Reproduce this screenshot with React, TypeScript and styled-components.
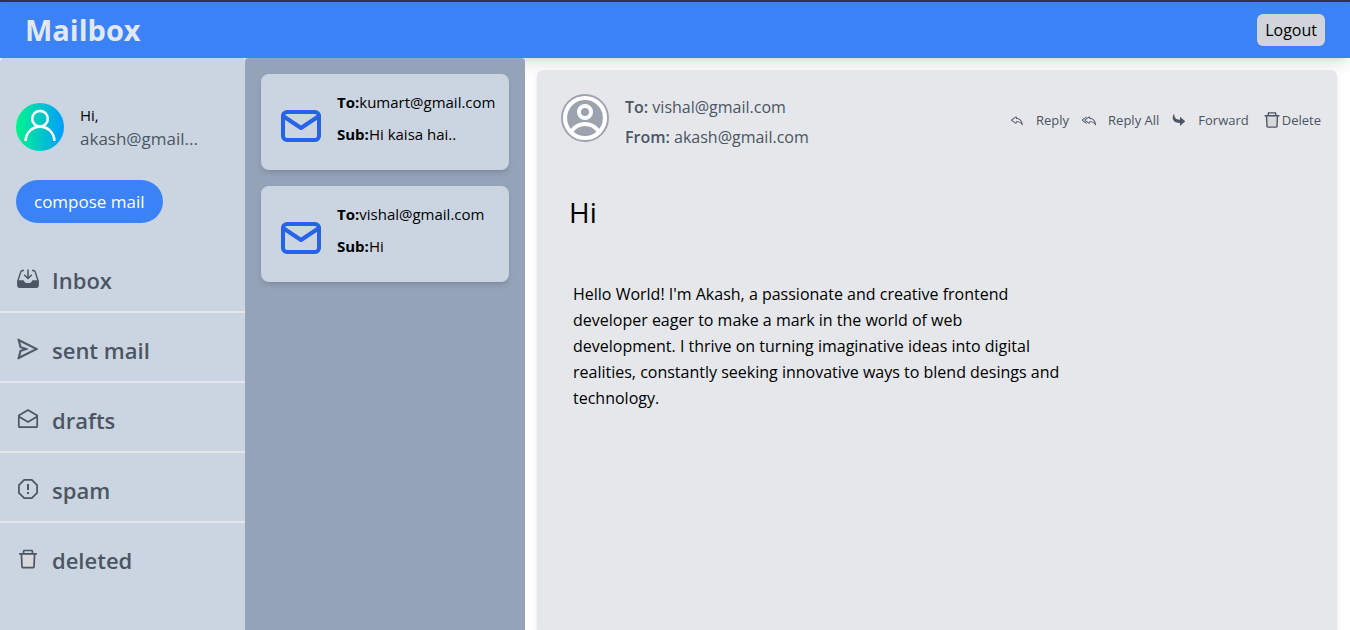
import React from "react";
import styled, { createGlobalStyle, css } from "styled-components";
import { AiOutlineSend } from "react-icons/ai";
import { TbMail } from "react-icons/tb";
import { BsReply, BsReplyAll } from "react-icons/bs";

const GlobalStyle = createGlobalStyle`
  *, *::before, *::after { box-sizing: border-box; }
  body {
    margin: 0;
    background: #fff;
    color: #000;
    font-family: "Open Sans", "Noto Sans", sans-serif;
    font-size: 15px;
    line-height: 24px;
  }
  h1, h2, p, ul { margin: 0; padding: 0; }
  ul { list-style: none; }
  button { font: inherit; border: 0; cursor: pointer; }
  svg { display: block; flex: none; }
`;

const Page = styled.div`
  display: flex;
  flex-direction: column;
  min-height: 100vh;
  border-top: 2px solid #2f3441;
`;

const Header = styled.header`
  display: flex;
  align-items: center;
  justify-content: space-between;
  height: 56px;
  padding: 0 25px;
  background: #3b82f6;
  box-shadow: 0 10px 15px -3px rgba(0, 0, 0, 0.1), 0 4px 6px -4px rgba(0, 0, 0, 0.1);
`;

const Brand = styled.h1`
  color: #e2e8f0;
  font-size: 29px;
  font-weight: 700;
  line-height: 36px;
`;

const LogoutButton = styled.button`
  height: 32px;
  padding: 0 8px;
  border-radius: 6px;
  background: #d1d5db;
  color: #000;
  font-size: 16px;
`;

const Columns = styled.div`
  display: flex;
  flex: 1;
`;

const Sidebar = styled.nav`
  position: relative;
  flex: none;
  width: 245px;
  padding-top: 45px;
  border-radius: 4px 4px 0 0;
  background: #cbd5e1;
`;

const Profile = styled.div`
  display: flex;
  align-items: center;
  gap: 16px;
  padding: 0 16px;
`;

const ProfileName = styled.p`
  flex: 1;
  white-space: nowrap;
`;

const Address = styled.span`
  color: #4b5563;
  font-size: 17px;
  font-weight: 500;
`;

const ComposeButton = styled.button`
  height: 43px;
  margin: 29px 16px 20px;
  padding: 0 18px;
  border-radius: 22px;
  background: #3b82f6;
  color: #fff;
  font-size: 17px;
`;

const Folder = styled.li`
  & + & {
    border-top: 2px solid #e5e7eb;
  }
`;

const FolderLink = styled.a`
  display: flex;
  align-items: center;
  gap: 12px;
  height: 68px;
  padding: 6px 16px 0;
  color: #4b5563;
  font-size: 22px;
  font-weight: 600;
  line-height: 32px;
  text-decoration: none;

  svg {
    margin-bottom: 2px;
  }
`;

const MailList = styled.ul`
  position: relative;
  display: flex;
  flex: none;
  flex-direction: column;
  gap: 16px;
  width: 280px;
  padding: 16px;
  border-radius: 4px 4px 0 0;
  background: #94a3b8;
`;

const MailCard = styled.li`
  display: flex;
  gap: 12px;
  height: 96px;
  padding: 12px 8px 12px 16px;
  border-radius: 8px;
  background: #cbd5e1;
  box-shadow: 0 4px 6px -1px rgba(0, 0, 0, 0.1), 0 2px 4px -2px rgba(0, 0, 0, 0.1);
  white-space: nowrap;

  svg {
    margin-top: 16px;
    color: #2563eb;
  }
`;

const CardLines = styled.div`
  line-height: 32px;
`;

const Reader = styled.main`
  display: flex;
  flex: 1;
  min-width: 0;
  padding: 12px 13px 0 12px;
`;

const Message = styled.article`
  flex: 1;
  padding: 22px 16px 24px 24px;
  border-radius: 6px 6px 0 0;
  background: #e5e7eb;
  box-shadow: 0 4px 6px -1px rgba(0, 0, 0, 0.1), 0 2px 4px -2px rgba(0, 0, 0, 0.1);
`;

const MessageHeader = styled.header`
  display: flex;
  align-items: flex-start;
  gap: 16px;
`;

const ContactIcon = styled.span`
  margin-top: 2px;
  border-radius: 50%;
  background: #9ca3af;
  color: #fff;
`;

const Parties = styled.div`
  flex: 1;
  color: #4b5563;
  font-size: 16px;
  line-height: 30px;

  b {
    font-weight: 600;
  }
`;

const Actions = styled.div`
  display: flex;
  align-items: center;
  gap: 13px;
  padding-top: 16px;
`;

const ActionButton = styled.button<{ $tight?: boolean }>`
  display: flex;
  align-items: center;
  gap: 12px;
  padding: 0;
  background: none;
  color: #4b5563;
  font-size: 13px;
  line-height: 24px;
  ${(p) => p.$tight && css`gap: 0;`}
`;

const Subject = styled.h2`
  margin: 42px 0 0 8px;
  font-size: 28px;
  font-weight: 400;
  line-height: 36px;
`;

const Body = styled.p`
  max-width: 492px;
  margin: 51px 0 0 12px;
  font-size: 16px;
  line-height: 26px;
`;

const UserAvatar = () => (
  <svg width="48" height="48" viewBox="0 0 48 48" fill="none" aria-hidden="true">
    <defs>
      <linearGradient id="avatar" x1="0" y1="0" x2="1" y2="0">
        <stop offset="0" stopColor="#00f58c" />
        <stop offset="1" stopColor="#009dff" />
      </linearGradient>
    </defs>
    <circle cx="24" cy="24" r="24" fill="url(#avatar)" />
    <g stroke="#fff" strokeWidth="2.6">
      <circle cx="24" cy="15.7" r="7.8" />
      <path d="M9.6 38a14.4 14.4 0 0 1 28.8 0" />
    </g>
  </svg>
);

const ContactAvatar = () => (
  <svg width="48" height="48" viewBox="0 0 48 48" fill="none" stroke="currentColor" aria-hidden="true">
    <circle cx="24" cy="24" r="20" strokeWidth="4.2" />
    <circle cx="24" cy="18" r="6" strokeWidth="4" />
    <path d="M10.500 37C14 32.500 18.500 30 24 30s10 2.500 13.500 7" strokeWidth="4" />
  </svg>
);

const InboxIcon = () => (
  <svg width="24" height="24" viewBox="0 0 24 24" fill="none" stroke="currentColor" aria-hidden="true">
    <path d="M8 3.500H6.600c-1 0-1.500.5-1.800 1.300L2 13.500v5M16 3.500h1.400c1 0 1.500.5 1.800 1.300L22 13.500v5" strokeWidth="1.400" />
    <path d="M12 2.500v8.500M8.200 7.800l3.800 3.700 3.800-3.700" strokeWidth="1.500" />
    <path d="M1.300 13.300H6.800c.8 0 1.100.4 1.400 1 .5 1.200 1.200 1.700 2.300 1.700h3c1.100 0 1.800-.5 2.300-1.700.3-.6.6-1 1.400-1h5.500V19a2 2 0 0 1-2 2H3.300a2 2 0 0 1-2-2z" fill="currentColor" stroke="none" />
  </svg>
);

const DraftsIcon = () => (
  <svg width="24" height="24" viewBox="0 0 24 24" fill="none" stroke="currentColor" strokeWidth="1.700" strokeLinejoin="round" aria-hidden="true">
    <path d="M2.800 8.500 12 3l9.200 5.500v10.700a1 1 0 0 1-1 1H3.800a1 1 0 0 1-1-1z" />
    <path d="M2.800 9.500 12 15l9.200-5.500" />
  </svg>
);

const SpamIcon = () => (
  <svg width="24" height="24" viewBox="0 0 24 24" fill="none" stroke="currentColor" aria-hidden="true">
    <path d="M8.200 2.900h7.600l5.300 5.300v7.600l-5.300 5.300H8.200l-5.300-5.300V8.200z" strokeWidth="1.700" />
    <path d="M12 7v6M12 15v2" strokeWidth="2" />
  </svg>
);

const TrashIcon = ({ size }: { size: number }) => (
  <svg width={size} height={size} viewBox="0 0 1024 1024" fill="currentColor" aria-hidden="true">
    <path fill="#d9d9d9" d="M292.700 840h438.600l24.200-512h-487z" />
    <path d="M864 256H736v-80c0-35.300-28.700-64-64-64H352c-35.300 0-64 28.700-64 64v80H160c-17.700 0-32 14.300-32 32v32c0 4.400 3.600 8 8 8h60.400l24.700 523c1.600 34.100 29.800 61 63.900 61h454c34.200 0 62.300-26.800 63.900-61l24.700-523H888c4.400 0 8-3.600 8-8v-32c0-17.700-14.300-32-32-32zm-504-72h304v72H360v-72zm371.300 656H292.700l-24.200-512h487l-24.200 512z" />
  </svg>
);

const ForwardIcon = () => (
  <svg width="14" height="14" viewBox="0 0 14 14" fill="currentColor" aria-hidden="true">
    <path d="M2.200.500C.3 3 .2 5.800 1.800 7.800 3 9.400 5 10 8 9.900V13l5.200-4.800L8 3.800v2.900C4.500 6.900 2 5 2.200.5z" />
  </svg>
);

const folders = [
  { name: "Inbox", icon: <InboxIcon /> },
  { name: "sent mail", icon: <AiOutlineSend size={24} stroke="currentColor" strokeWidth={16} /> },
  { name: "drafts", icon: <DraftsIcon /> },
  { name: "spam", icon: <SpamIcon /> },
  { name: "deleted", icon: <TrashIcon size={24} /> },
];

const mails = [
  { to: "kumart@gmail.com", subject: "Hi kaisa hai.." },
  { to: "vishal@gmail.com", subject: "Hi" },
];

export default function App() {
  return (
    <Page>
      <GlobalStyle />
      <Header>
        <Brand>Mailbox</Brand>
        <LogoutButton type="button">Logout</LogoutButton>
      </Header>
      <Columns>
        <Sidebar>
          <Profile>
            <UserAvatar />
            <ProfileName>
              Hi,
              <br />
              <Address>akash@gmail...</Address>
            </ProfileName>
          </Profile>
          <ComposeButton type="button">compose mail</ComposeButton>
          <ul>
            {folders.map((f) => (
              <Folder key={f.name}>
                <FolderLink href="#">
                  {f.icon}
                  {f.name}
                </FolderLink>
              </Folder>
            ))}
          </ul>
        </Sidebar>
        <MailList>
          {mails.map((m) => (
            <MailCard key={m.to}>
              <TbMail size={48} />
              <CardLines>
                <p><b>To:</b>{m.to}</p>
                <p><b>Sub:</b>{m.subject}</p>
              </CardLines>
            </MailCard>
          ))}
        </MailList>
        <Reader>
          <Message>
            <MessageHeader>
              <ContactIcon>
                <ContactAvatar />
              </ContactIcon>
              <Parties>
                <p><b>To:</b> vishal@gmail.com</p>
                <p><b>From:</b> akash@gmail.com</p>
              </Parties>
              <Actions>
                <ActionButton type="button"><BsReply size={14} />Reply</ActionButton>
                <ActionButton type="button"><BsReplyAll size={14} />Reply All</ActionButton>
                <ActionButton type="button"><ForwardIcon />Forward</ActionButton>
                <ActionButton type="button" $tight><TrashIcon size={20} />Delete</ActionButton>
              </Actions>
            </MessageHeader>
            <Subject>Hi</Subject>
            <Body>
              Hello World! I'm Akash, a passionate and creative frontend developer eager to make a
              mark in the world of web development. I thrive on turning imaginative ideas into
              digital realities, constantly seeking innovative ways to blend desings and technology.
            </Body>
          </Message>
        </Reader>
      </Columns>
    </Page>
  );
}
